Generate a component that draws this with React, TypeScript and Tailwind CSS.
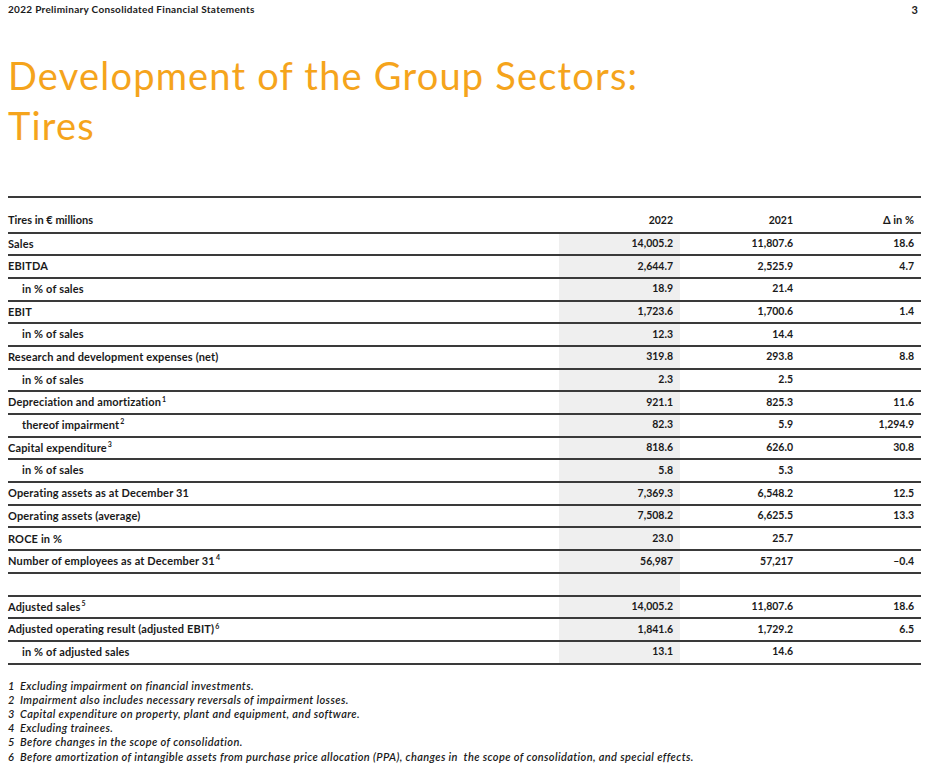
import React from "react";

type Row = {
  label: string;
  sup?: string;
  indent?: boolean;
  y22?: string;
  y21?: string;
  delta?: string;
};

const rows: Row[] = [
  { label: "Sales", y22: "14,005.2", y21: "11,807.6", delta: "18.6" },
  { label: "EBITDA", y22: "2,644.7", y21: "2,525.9", delta: "4.7" },
  { label: "in % of sales", indent: true, y22: "18.9", y21: "21.4" },
  { label: "EBIT", y22: "1,723.6", y21: "1,700.6", delta: "1.4" },
  { label: "in % of sales", indent: true, y22: "12.3", y21: "14.4" },
  { label: "Research and development expenses (net)", y22: "319.8", y21: "293.8", delta: "8.8" },
  { label: "in % of sales", indent: true, y22: "2.3", y21: "2.5" },
  { label: "Depreciation and amortization", sup: "1", y22: "921.1", y21: "825.3", delta: "11.6" },
  { label: "thereof impairment", sup: "2", indent: true, y22: "82.3", y21: "5.9", delta: "1,294.9" },
  { label: "Capital expenditure", sup: "3", y22: "818.6", y21: "626.0", delta: "30.8" },
  { label: "in % of sales", indent: true, y22: "5.8", y21: "5.3" },
  { label: "Operating assets as at December 31", y22: "7,369.3", y21: "6,548.2", delta: "12.5" },
  { label: "Operating assets (average)", y22: "7,508.2", y21: "6,625.5", delta: "13.3" },
  { label: "ROCE in %", y22: "23.0", y21: "25.7" },
  { label: "Number of employees as at December 31", sup: "4", y22: "56,987", y21: "57,217", delta: "–0.4" },
  { label: "" },
  { label: "Adjusted sales", sup: "5", y22: "14,005.2", y21: "11,807.6", delta: "18.6" },
  { label: "Adjusted operating result (adjusted EBIT)", sup: "6", y22: "1,841.6", y21: "1,729.2", delta: "6.5" },
  { label: "in % of adjusted sales", indent: true, y22: "13.1", y21: "14.6" },
];

const notes = [
  "Excluding impairment on financial investments.",
  "Impairment also includes necessary reversals of impairment losses.",
  "Capital expenditure on property, plant and equipment, and software.",
  "Excluding trainees.",
  "Before changes in the scope of consolidation.",
  "Before amortization of intangible assets from purchase price allocation (PPA), changes in  the scope of consolidation, and special effects.",
];

export default function App() {
  return (
    <div className="w-[929px] h-[768px] bg-white text-[#1a1a1a] font-['Lato',sans-serif] overflow-hidden">
      <div className="flex justify-between px-2 pt-[2px]">
        <span className="text-[10px] font-bold tracking-[0.3px]">2022 Preliminary Consolidated Financial Statements</span>
        <span className="text-[11px] font-bold pr-[3px]">3</span>
      </div>

      <h1 className="px-2 mt-[31px] text-[38px] leading-[50px] tracking-[1.2px] text-[#f5a41c] font-normal">
        Development of the Group Sectors:
        <br />
        Tires
      </h1>

      <div className="mx-2 mt-[46px] border-t-2 border-[#3a3a3a] text-[11px] font-bold">
        <div className="flex h-[36px] items-end pb-[3px] border-b-2 border-[#3a3a3a]">
          <div className="flex-1">Tires in € millions</div>
          <div className="w-[121px] text-right pr-[7px] text-[10.5px]">2022</div>
          <div className="w-[119px] text-right pr-[6px] text-[10.5px]">2021</div>
          <div className="w-[122px] text-right pr-[7px]">Δ in %</div>
        </div>
        {rows.map((r, i) => (
          <div key={i} className="flex h-[22.7px] border-b-2 border-[#3a3a3a]">
            <div className={`flex-1 flex items-center tracking-[0.15px] ${r.indent ? "pl-[14px]" : ""}`}>
              {r.label}
              {r.sup && <sup className="text-[7px] ml-[1px] -top-[4px]">{r.sup}</sup>}
            </div>
            <div className="w-[121px] flex items-center justify-end pr-[7px] bg-[#efefef] text-[10.5px]">{r.y22}</div>
            <div className="w-[119px] flex items-center justify-end pr-[6px] text-[10.5px]">{r.y21}</div>
            <div className="w-[122px] flex items-center justify-end pr-[7px] text-[10.5px]">{r.delta}</div>
          </div>
        ))}
      </div>

      <div className="px-2 mt-[14px] text-[11px] italic font-semibold leading-[14.2px] tracking-[0.38px]">
        {notes.map((n, i) => (
          <div key={i} className="flex whitespace-pre">
            <span className="w-[12px]">{i + 1}</span>
            <span>{n}</span>
          </div>
        ))}
      </div>
    </div>
  );
}
